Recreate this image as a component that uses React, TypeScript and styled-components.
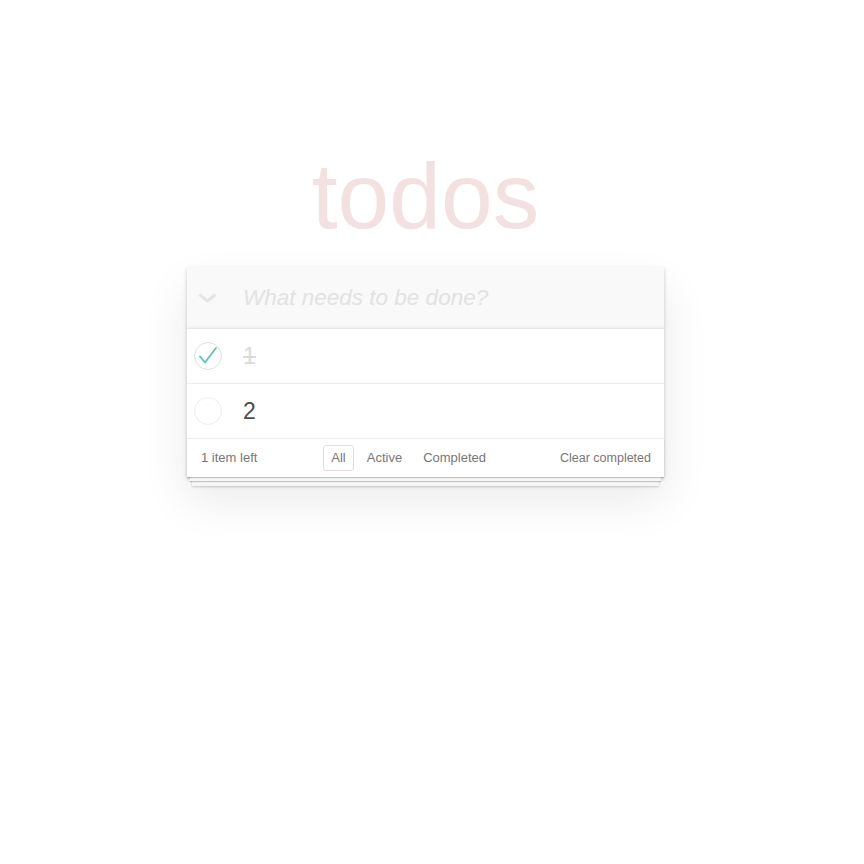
import React from "react";
import styled, { createGlobalStyle } from "styled-components";

const GlobalStyle = createGlobalStyle`
  html, body {
    margin: 0;
    padding: 0;
    background: #ffffff;
  }
  body {
    font-family: "Liberation Sans", Helvetica, Arial, sans-serif;
    -webkit-font-smoothing: antialiased;
  }
  * { box-sizing: border-box; }
`;

const Page = styled.div`
  width: 851px;
  display: flex;
  flex-direction: column;
  align-items: center;
  padding-top: 150px;
  padding-bottom: 60px;
`;

const Title = styled.h1`
  margin: 0;
  height: 93px;
  font-size: 93px;
  line-height: 93px;
  font-weight: 400;
  color: rgba(175, 47, 47, 0.15);
  text-align: center;
`;

const Card = styled.section`
  width: 477px;
  margin-top: 24px;
  background: #fff;
  position: relative;
  box-shadow: 0 2px 4px rgba(0, 0, 0, 0.2), 0 22px 44px rgba(0, 0, 0, 0.09);
`;

const Header = styled.header`
  display: flex;
  align-items: center;
  height: 62px;
  background: #f9f9f9;
  border-bottom: 1px solid #e8e8e8;
  box-shadow: inset 0 -2px 1px rgba(0, 0, 0, 0.03);
`;

const ToggleAll = styled.button`
  width: 41px;
  height: 100%;
  padding: 0;
  border: none;
  background: transparent;
  display: flex;
  align-items: center;
  justify-content: center;
  cursor: pointer;
`;

const NewTodo = styled.input`
  flex: 1;
  height: 100%;
  border: none;
  outline: none;
  background: transparent;
  padding: 0 16px 0 15px;
  font-family: inherit;
  font-size: 22.5px;
  font-style: italic;
  font-weight: 300;
  color: #4d4d4d;
  &::placeholder {
    color: #e2e2e2;
    font-style: italic;
  }
`;

const List = styled.ul`
  list-style: none;
  margin: 0;
  padding: 0;
`;

const Item = styled.li`
  display: flex;
  align-items: center;
  height: 55px;
  border-bottom: 1px solid #ededed;
`;

const Check = styled.span`
  width: 28px;
  height: 28px;
  margin-left: 7px;
  display: flex;
  flex: none;
`;

const Label = styled.label<{ $done?: boolean }>`
  margin-left: 21px;
  font-size: 23px;
  line-height: 28px;
  color: ${(p) => (p.$done ? "#d9d9d9" : "#4d4d4d")};
  text-decoration: ${(p) => (p.$done ? "line-through" : "none")};
`;

const Footer = styled.footer`
  position: relative;
  display: flex;
  align-items: center;
  justify-content: space-between;
  height: 38px;
  padding: 0 13px 0 14px;
  font-size: 13px;
  color: #777;
  &::before {
    content: "";
    position: absolute;
    left: 0;
    right: 0;
    bottom: 0;
    height: 38px;
    pointer-events: none;
    box-shadow: 0 1px 1px rgba(0, 0, 0, 0.2), 0 7px 0 -3px #f6f6f6,
      0 8px 1px -3px rgba(0, 0, 0, 0.2), 0 14px 0 -5px #f6f6f6,
      0 15px 2px -5px rgba(0, 0, 0, 0.2);
  }
`;

const Count = styled.span`
  line-height: 18px;
`;

const Filters = styled.ul`
  list-style: none;
  margin: 0;
  padding: 0;
  display: flex;
  gap: 5px;
`;

const FilterLink = styled.a<{ $selected?: boolean }>`
  display: block;
  padding: 3px 7px;
  line-height: 18px;
  color: inherit;
  text-decoration: none;
  border: 1px solid ${(p) => (p.$selected ? "#e8dcdc" : "transparent")};
  border-radius: 3px;
`;

const ClearButton = styled.button`
  border: none;
  background: transparent;
  padding: 0;
  font-family: inherit;
  font-size: 12.5px;
  line-height: 18px;
  color: #777;
  cursor: pointer;
`;

const Chevron = () => (
  <svg width="19" height="10" viewBox="0 0 19 10" aria-hidden="true">
    <polyline
      points="1.5,1.5 9.5,8 17.5,1.5"
      fill="none"
      stroke="#e4e4e4"
      strokeWidth="3"
      strokeLinejoin="miter"
    />
  </svg>
);

const Circle = ({ done }: { done: boolean }) => (
  <svg width="28" height="28" viewBox="0 0 28 28" aria-hidden="true">
    <circle
      cx="14"
      cy="14"
      r="13.5"
      fill="none"
      stroke={done ? "#d3e3e0" : "#ededed"}
      strokeWidth="1"
    />
    {done && (
      <polyline
        points="6,14.5 11,20.5 22,6"
        fill="none"
        stroke="#5dc2af"
        strokeWidth="1.8"
        strokeLinecap="round"
        strokeLinejoin="round"
      />
    )}
  </svg>
);

const todos = [
  { id: 1, title: "1", done: true },
  { id: 2, title: "2", done: false },
];

export default function App() {
  return (
    <>
      <GlobalStyle />
      <Page>
        <Title>todos</Title>
        <Card>
          <Header>
            <ToggleAll aria-label="Mark all as complete">
              <Chevron />
            </ToggleAll>
            <NewTodo placeholder="What needs to be done?" />
          </Header>
          <List>
            {todos.map((t) => (
              <Item key={t.id}>
                <Check>
                  <Circle done={t.done} />
                </Check>
                <Label $done={t.done}>{t.title}</Label>
              </Item>
            ))}
          </List>
          <Footer>
            <Count>1 item left</Count>
            <Filters>
              <li>
                <FilterLink href="#/" $selected>
                  All
                </FilterLink>
              </li>
              <li>
                <FilterLink href="#/active">Active</FilterLink>
              </li>
              <li>
                <FilterLink href="#/completed">Completed</FilterLink>
              </li>
            </Filters>
            <ClearButton>Clear completed</ClearButton>
          </Footer>
        </Card>
      </Page>
    </>
  );
}
